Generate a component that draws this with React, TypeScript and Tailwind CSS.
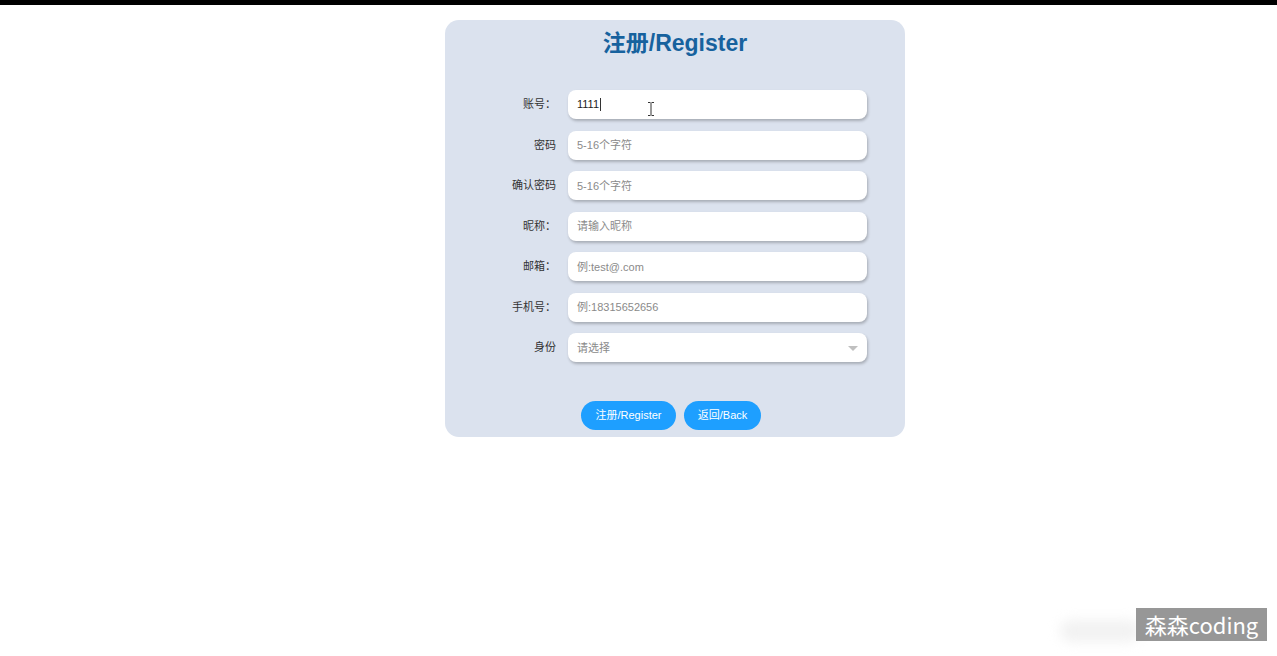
import React from "react";

const font = { fontFamily: '"Liberation Sans", Arial, "Noto Sans CJK SC", sans-serif' };

const rows: { label: string; value?: string; placeholder?: string; select?: boolean }[] = [
  { label: "账号：", value: "1111" },
  { label: "密码", placeholder: "5-16个字符" },
  { label: "确认密码", placeholder: "5-16个字符" },
  { label: "昵称：", placeholder: "请输入昵称" },
  { label: "邮箱：", placeholder: "例:test@.com" },
  { label: "手机号：", placeholder: "例:18315652656" },
  { label: "身份", placeholder: "请选择", select: true },
];

export default function App() {
  return (
    <div className="relative w-full h-[656px] bg-white overflow-hidden" style={font}>
      <div className="h-[5px] bg-black" />
      <div className="ml-[445px] mt-[15px] w-[460px] h-[417px] rounded-[14px] bg-[#dbe2ee] flex flex-col">
        <h1 className="text-center text-[23px] leading-[28px] font-bold text-[#17629e] mt-[9px]">注册/Register</h1>
        <div className="mt-[33px] flex flex-col gap-[11.5px]">
          {rows.map((r, i) => (
            <div key={i} className="flex items-center h-[29px]">
              <div className="w-[111px] text-right text-[11px] text-[#333] pr-0">{r.label}</div>
              <div className="ml-[12px] w-[299px] h-[29px] bg-white rounded-[8px] shadow-[1px_2px_3px_rgba(0,0,0,0.24)] flex items-center pl-[9px] pr-[9px] relative">
                {r.value ? (
                  <span className="text-[11px] text-[#222] flex items-center">
                    {r.value}
                    <span className="inline-block w-px h-[13px] bg-[#333] ml-[1px]" />
                  </span>
                ) : (
                  <span className="text-[11px] text-[#8a8a8a] mt-px">{r.placeholder}</span>
                )}
                {r.select && (
                  <span className="absolute right-[9px] top-[13px] w-0 h-0 border-l-[5px] border-r-[5px] border-t-[5px] border-l-transparent border-r-transparent border-t-[#c0c0c0]" />
                )}
              </div>
            </div>
          ))}
        </div>
        <div className="mt-[39px] ml-[136px] flex gap-[8px]">
          <button className="w-[95px] h-[29px] rounded-full bg-[#1e9fff] text-white text-[11px]">注册/Register</button>
          <button className="w-[77px] h-[29px] rounded-full bg-[#1e9fff] text-white text-[11px]">返回/Back</button>
        </div>
      </div>
      {/* mouse I-beam cursor */}
      <svg className="absolute left-[647px] top-[102px]" width="8" height="14" viewBox="0 0 8 14">
        <path d="M1 0.5h2.5M4.5 0.5H7M1 13.5h2.5M4.5 13.5H7M4 1v12" stroke="#333" strokeWidth="1" fill="none" />
      </svg>
      {/* watermark */}
      <div className="absolute left-[1060px] top-[620px] w-[80px] h-[22px] rounded-full bg-[#f2f2f2] blur-[6px]" />
      <div className="absolute left-[1136px] top-[608px] w-[131px] h-[33px] bg-[#979797] flex items-center justify-center text-white text-[22px]" style={{ fontFamily: '"Noto Sans CJK SC", "Noto Sans", sans-serif' }}>
        森森coding
      </div>
    </div>
  );
}
